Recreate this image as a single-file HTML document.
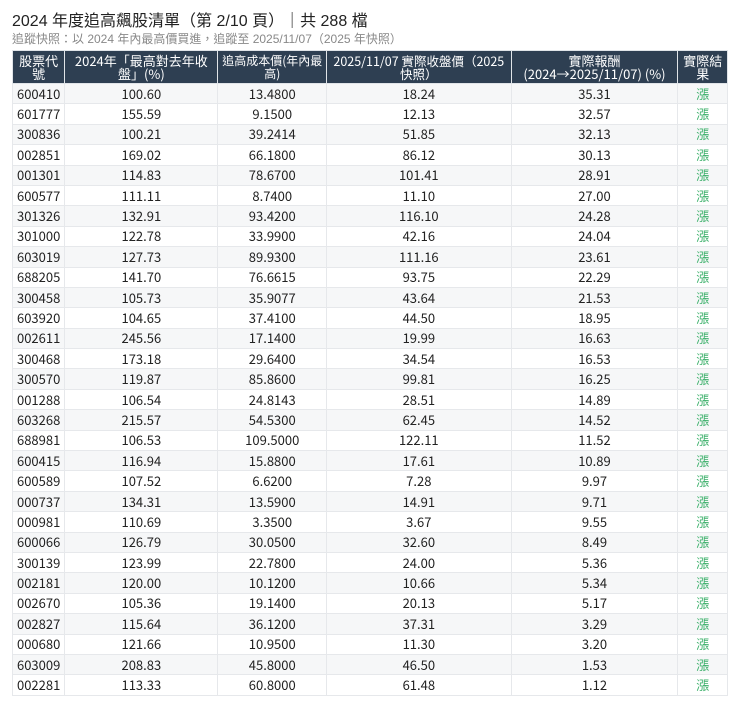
<!DOCTYPE html>
<html><head><meta charset="utf-8"><style>
body{margin:0;background:#fff;font-family:"Liberation Sans","Noto Sans CJK TC",sans-serif;color:#222;}
.t{position:absolute;left:12px;top:7px;font-size:16px;color:#222;white-space:nowrap;}
.s{position:absolute;left:12px;top:30px;font-size:12px;color:#888;white-space:nowrap;}
table{position:absolute;left:12px;top:50px;width:716px;border-collapse:collapse;font-size:13px;font-family:"Noto Sans CJK TC",sans-serif;}
th{background:#2e3f52;color:#fff;font-weight:normal;line-height:13px;height:32px;padding:0 1px;border:1px solid #e0e4e8;font-size:13px;white-space:nowrap;}
tr.r{height:20.4px;}
td{padding:0 4px;text-align:center;border:1px solid #e6e8eb;line-height:16px;}
td:first-child{text-align:left;}
tr:nth-child(even) td{background:#f6f7f8;}
td:last-child{color:#3bb06a;}
</style></head><body>
<div class="t">2024 年度追高飆股清單（第 2/10 頁）｜共 288 檔</div>
<div class="s">追蹤快照：以 2024 年內最高價買進，追蹤至 2025/11/07（2025 年快照）</div>
<table>
<colgroup><col style="width:50px"><col style="width:154px"><col style="width:109px"><col style="width:185px"><col style="width:168px"><col style="width:50px"></colgroup>
<tr><th>股票代<br>號</th><th>2024年「最高對去年收<br>盤」(%)</th><th style="font-size:12px">追高成本價(年內最<br>高)</th><th style="font-size:12.5px">2025/11/07 實際收盤價（2025<br>快照）</th><th>實際報酬<br>(2024→2025/11/07) (%)</th><th>實際結<br>果</th></tr>
<tr class="r"><td>600410</td><td>100.60</td><td>13.4800</td><td>18.24</td><td>35.31</td><td>漲</td></tr>
<tr class="r"><td>601777</td><td>155.59</td><td>9.1500</td><td>12.13</td><td>32.57</td><td>漲</td></tr>
<tr class="r"><td>300836</td><td>100.21</td><td>39.2414</td><td>51.85</td><td>32.13</td><td>漲</td></tr>
<tr class="r"><td>002851</td><td>169.02</td><td>66.1800</td><td>86.12</td><td>30.13</td><td>漲</td></tr>
<tr class="r"><td>001301</td><td>114.83</td><td>78.6700</td><td>101.41</td><td>28.91</td><td>漲</td></tr>
<tr class="r"><td>600577</td><td>111.11</td><td>8.7400</td><td>11.10</td><td>27.00</td><td>漲</td></tr>
<tr class="r"><td>301326</td><td>132.91</td><td>93.4200</td><td>116.10</td><td>24.28</td><td>漲</td></tr>
<tr class="r"><td>301000</td><td>122.78</td><td>33.9900</td><td>42.16</td><td>24.04</td><td>漲</td></tr>
<tr class="r"><td>603019</td><td>127.73</td><td>89.9300</td><td>111.16</td><td>23.61</td><td>漲</td></tr>
<tr class="r"><td>688205</td><td>141.70</td><td>76.6615</td><td>93.75</td><td>22.29</td><td>漲</td></tr>
<tr class="r"><td>300458</td><td>105.73</td><td>35.9077</td><td>43.64</td><td>21.53</td><td>漲</td></tr>
<tr class="r"><td>603920</td><td>104.65</td><td>37.4100</td><td>44.50</td><td>18.95</td><td>漲</td></tr>
<tr class="r"><td>002611</td><td>245.56</td><td>17.1400</td><td>19.99</td><td>16.63</td><td>漲</td></tr>
<tr class="r"><td>300468</td><td>173.18</td><td>29.6400</td><td>34.54</td><td>16.53</td><td>漲</td></tr>
<tr class="r"><td>300570</td><td>119.87</td><td>85.8600</td><td>99.81</td><td>16.25</td><td>漲</td></tr>
<tr class="r"><td>001288</td><td>106.54</td><td>24.8143</td><td>28.51</td><td>14.89</td><td>漲</td></tr>
<tr class="r"><td>603268</td><td>215.57</td><td>54.5300</td><td>62.45</td><td>14.52</td><td>漲</td></tr>
<tr class="r"><td>688981</td><td>106.53</td><td>109.5000</td><td>122.11</td><td>11.52</td><td>漲</td></tr>
<tr class="r"><td>600415</td><td>116.94</td><td>15.8800</td><td>17.61</td><td>10.89</td><td>漲</td></tr>
<tr class="r"><td>600589</td><td>107.52</td><td>6.6200</td><td>7.28</td><td>9.97</td><td>漲</td></tr>
<tr class="r"><td>000737</td><td>134.31</td><td>13.5900</td><td>14.91</td><td>9.71</td><td>漲</td></tr>
<tr class="r"><td>000981</td><td>110.69</td><td>3.3500</td><td>3.67</td><td>9.55</td><td>漲</td></tr>
<tr class="r"><td>600066</td><td>126.79</td><td>30.0500</td><td>32.60</td><td>8.49</td><td>漲</td></tr>
<tr class="r"><td>300139</td><td>123.99</td><td>22.7800</td><td>24.00</td><td>5.36</td><td>漲</td></tr>
<tr class="r"><td>002181</td><td>120.00</td><td>10.1200</td><td>10.66</td><td>5.34</td><td>漲</td></tr>
<tr class="r"><td>002670</td><td>105.36</td><td>19.1400</td><td>20.13</td><td>5.17</td><td>漲</td></tr>
<tr class="r"><td>002827</td><td>115.64</td><td>36.1200</td><td>37.31</td><td>3.29</td><td>漲</td></tr>
<tr class="r"><td>000680</td><td>121.66</td><td>10.9500</td><td>11.30</td><td>3.20</td><td>漲</td></tr>
<tr class="r"><td>603009</td><td>208.83</td><td>45.8000</td><td>46.50</td><td>1.53</td><td>漲</td></tr>
<tr class="r"><td>002281</td><td>113.33</td><td>60.8000</td><td>61.48</td><td>1.12</td><td>漲</td></tr>
</table>
</body></html>
